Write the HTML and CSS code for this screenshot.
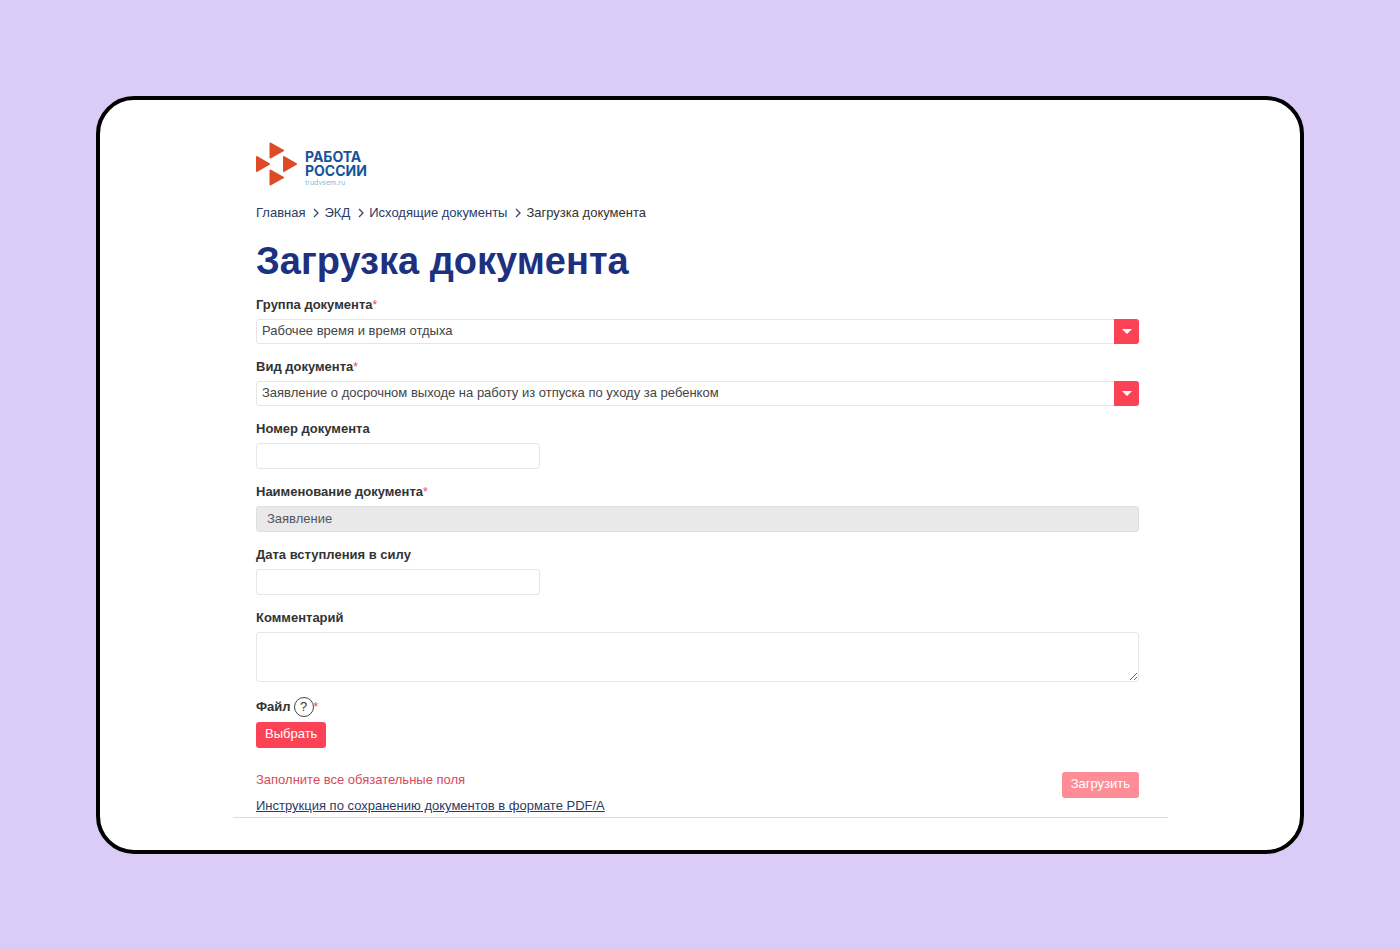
FILE: index.html
```html
<!DOCTYPE html>
<html lang="ru">
<head>
<meta charset="utf-8">
<meta name="viewport" content="width=device-width, initial-scale=1">
<title>Загрузка документа</title>
<link rel="stylesheet" href="styles.css">
</head>
<body>
<main class="card">
  <div class="sheet">
    <a class="logo" href="#">
      <svg class="logo-mark" viewBox="0 0 41 44" aria-hidden="true">
        <path d="M14.500 1.500 27 8.500 14.500 15.500ZM1 15 13 22 1 29ZM28 15 40 22 28 29ZM14.500 28.500 27 35.500 14.500 42.500Z"/>
      </svg>
      <span class="logo-text">
        <span class="logo-name">РАБОТА РОССИИ</span>
        <span class="logo-site">trudvsem.ru</span>
      </span>
    </a>

    <nav class="crumbs" aria-label="Навигация">
      <a href="#">Главная</a>
      <svg class="chevron" viewBox="0 0 6 10" aria-hidden="true"><path d="M1 1 5 5 1 9"/></svg>
      <a href="#">ЭКД</a>
      <svg class="chevron" viewBox="0 0 6 10" aria-hidden="true"><path d="M1 1 5 5 1 9"/></svg>
      <a href="#">Исходящие документы</a>
      <svg class="chevron" viewBox="0 0 6 10" aria-hidden="true"><path d="M1 1 5 5 1 9"/></svg>
      <span class="current">Загрузка документа</span>
    </nav>

    <h1 class="title">Загрузка документа</h1>

    <form class="form">
      <div class="field">
        <label for="group">Группа документа<span class="req">*</span></label>
        <div class="select-box">
          <select id="group" class="control select"><option>Рабочее время и время отдыха</option></select>
          <span class="arrow"><svg viewBox="0 0 10 5" aria-hidden="true"><path d="M0 0H10L5 5Z"/></svg></span>
        </div>
      </div>
      <div class="field">
        <label for="kind">Вид документа<span class="req">*</span></label>
        <div class="select-box">
          <select id="kind" class="control select"><option>Заявление о досрочном выходе на работу из отпуска по уходу за ребенком</option></select>
          <span class="arrow"><svg viewBox="0 0 10 5" aria-hidden="true"><path d="M0 0H10L5 5Z"/></svg></span>
        </div>
      </div>
      <div class="field">
        <label for="number">Номер документа</label>
        <input id="number" class="control short" type="text">
      </div>
      <div class="field">
        <label for="name">Наименование документа<span class="req">*</span></label>
        <input id="name" class="control" type="text" value="Заявление" disabled>
      </div>
      <div class="field">
        <label for="date">Дата вступления в силу</label>
        <input id="date" class="control short" type="text">
      </div>
      <div class="field">
        <label for="comment">Комментарий</label>
        <textarea id="comment" class="control area"></textarea>
      </div>
      <div class="field file">
        <div class="file-label">
          <span id="file-label">Файл</span>
          <button class="help" type="button" aria-label="Справка">?</button><span class="req">*</span>
        </div>
        <button class="button" type="button" aria-describedby="file-label">Выбрать</button>
      </div>
      <div class="footer">
        <div class="notes">
          <p class="error">Заполните все обязательные поля</p>
          <a class="guide" href="#">Инструкция по сохранению документов в формате PDF/A</a>
        </div>
        <button class="button" type="submit" disabled>Загрузить</button>
      </div>
    </form>
  </div>
</main>
</body>
</html>
```
FILE: styles.css
```css
* { box-sizing: border-box; }

body {
  margin: 0;
  min-height: 100vh;
  padding: 96px;
  background: #dbcbf7;
  color: #333;
  font: 13px/16px "Liberation Sans", Arial, sans-serif;
}

.card {
  padding: 39px 132px 32px 133px;
  border: 4px solid #000;
  border-radius: 38px;
  background: #fff;
}

.sheet {
  padding: 3px 29px 3px 23px;
  border-bottom: 1px solid #d9dadb;
}

.logo {
  display: flex;
  width: max-content;
  gap: 8px;
  text-decoration: none;
}
.logo-mark {
  width: 41px;
  height: 44px;
  fill: #df4b26;
  stroke: #df4b26;
  stroke-width: 2;
  stroke-linejoin: round;
}
.logo-text {
  display: flex;
  flex-direction: column;
  width: 72px;
  padding-top: 8px;
}
.logo-name {
  color: #15549a;
  font: 700 14px/14px Inter, sans-serif;
}
.logo-site {
  color: #7fb9df;
  font: 7px/10px Inter, sans-serif;
}

.crumbs {
  display: flex;
  align-items: center;
  gap: 5px;
  margin-top: 17px;
}
.crumbs a {
  color: #2c3a69;
  text-decoration: none;
}
.chevron {
  width: 6px;
  height: 10px;
  margin-left: 3px;
  fill: none;
  stroke: #3d4668;
  stroke-width: 1.3;
}

.title {
  margin: 18px 0 14px;
  color: #1d3180;
  font-size: 38px;
  line-height: 44px;
}

.form {
  display: flex;
  flex-direction: column;
  gap: 15px;
}
.field {
  display: flex;
  flex-direction: column;
  align-items: flex-start;
  gap: 6px;
}
.field label,
.file-label { font-weight: 700; }
.req {
  color: #e8485a;
  font-size: 12px;
  font-weight: 400;
}

.control {
  width: 100%;
  height: 26px;
  padding: 0 10px;
  border: 1px solid #e6e6e6;
  border-radius: 3px;
  background: #fff;
  color: #444;
  font: inherit;
}
.control:disabled {
  padding-bottom: 1px;
  border-color: #e0e0e0;
  background: #e9e9e9;
  color: #555;
}
.short { width: 284px; }
.area {
  display: block;
  height: 50px;
  resize: both;
}
.select-box {
  position: relative;
  width: 100%;
}
.select {
  display: block;
  height: 25px;
  padding: 0 30px 2px 5px;
  appearance: none;
}
.arrow {
  position: absolute;
  top: 0;
  right: 0;
  bottom: 0;
  display: grid;
  place-items: center;
  width: 25px;
  border-radius: 0 3px 3px 0;
  background: #fc4255;
  pointer-events: none;
}
.arrow svg {
  width: 10px;
  height: 5px;
  fill: #fff;
}

.file { gap: 5px; }
.file-label {
  display: flex;
  align-items: center;
  height: 20px;
}
.help {
  width: 20px;
  height: 20px;
  margin-left: 3px;
  padding: 0;
  border: 1px solid #444;
  border-radius: 50%;
  background: none;
  color: #333;
  font: inherit;
  font-weight: 400;
}
.button {
  height: 26px;
  padding: 0 9px 2px;
  border: 0;
  border-radius: 3px;
  background: #fc4255;
  color: #fff;
  font: inherit;
}
.button:disabled { background: #fe8d98; }

.footer {
  display: flex;
  justify-content: space-between;
  align-items: flex-start;
  padding-top: 9px;
}
.error {
  margin: 0 0 10px;
  color: #d64a5a;
}
.guide { color: #2c3a69; }
```
